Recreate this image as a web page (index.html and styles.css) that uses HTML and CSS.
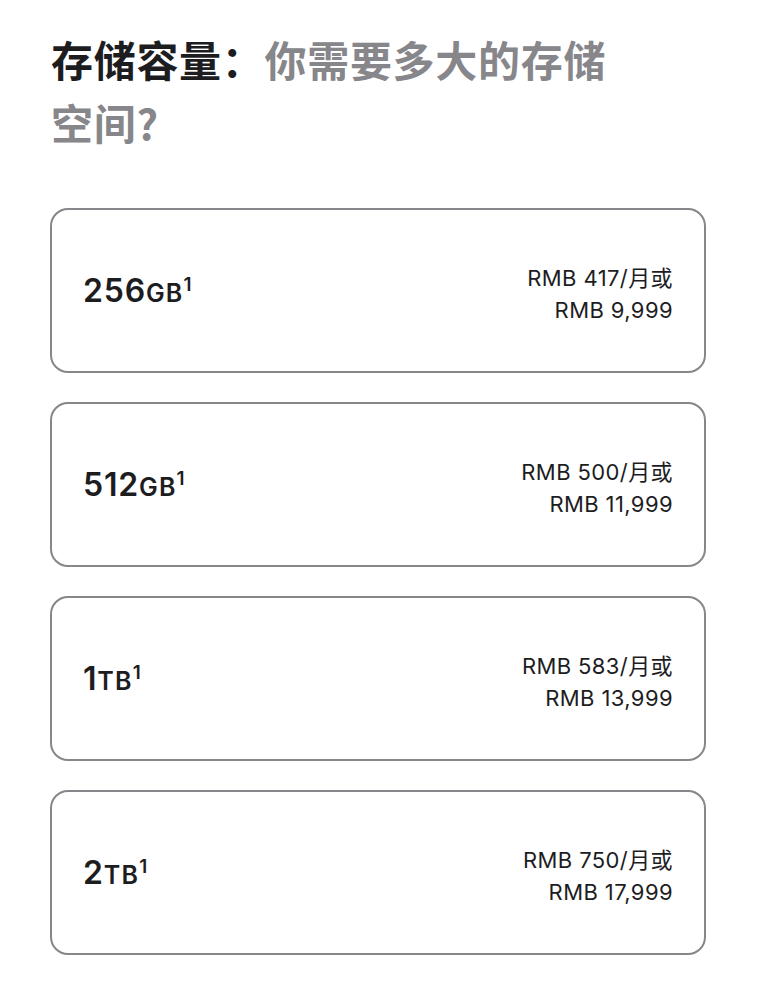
FILE: index.html
```html
<!DOCTYPE html>
<html lang="zh-CN">
<head>
    <meta charset="UTF-8">
    <meta name="viewport" content="width=device-width, initial-scale=1.0">
    <title>存储容量</title>
    <link rel="stylesheet" href="styles.css">
</head>
<body>
    <div class="container">
        <h2 class="title"><span class="title-main">存储容量：</span><span class="title-sub">你需要多大的存储空间?</span></h2>

        <div class="options">
            <div class="option">
                <div class="capacity">256<span class="unit">GB</span><sup>1</sup></div>
                <div class="price">
                    <p>RMB 417/月或</p>
                    <p>RMB 9,999</p>
                </div>
            </div>
            <div class="option">
                <div class="capacity">512<span class="unit">GB</span><sup>1</sup></div>
                <div class="price">
                    <p>RMB 500/月或</p>
                    <p>RMB 11,999</p>
                </div>
            </div>
            <div class="option">
                <div class="capacity">1<span class="unit">TB</span><sup>1</sup></div>
                <div class="price">
                    <p>RMB 583/月或</p>
                    <p>RMB 13,999</p>
                </div>
            </div>
            <div class="option">
                <div class="capacity">2<span class="unit">TB</span><sup>1</sup></div>
                <div class="price">
                    <p>RMB 750/月或</p>
                    <p>RMB 17,999</p>
                </div>
            </div>
        </div>
    </div>
</body>
</html>
```

FILE: styles.css
```css
body {
    font-family: Inter, "Noto Sans CJK SC", sans-serif;
    background-color: #fff;
    color: #1d1d1f;
    margin: 0;
    padding: 0;
}
.container {
    width: 656px;
    margin-left: 50px;
}
.title {
    max-width: 590px;
    margin: 27px 0 55px 1px;
    font-family: "Noto Sans CJK SC", sans-serif;
    font-size: 42px;
    font-weight: 700;
    line-height: 63px;
    letter-spacing: 0.7px;
    color: #1d1d1f;
}
.title-sub {
    color: #86868b;
}
.options {
    display: flex;
    flex-direction: column;
    gap: 29px;
}
.option {
    height: 165px;
    box-sizing: border-box;
    border: 2px solid #86868b;
    border-radius: 18px;
    padding: 0 31px;
    display: flex;
    align-items: center;
    justify-content: space-between;
}
.capacity {
    font-size: 32px;
    font-weight: 600;
    letter-spacing: 0.8px;
}
.unit {
    font-size: 25px;
    letter-spacing: 1.2px;
}
.capacity sup {
    font-size: 19px;
    font-weight: 600;
    vertical-align: 11px;
    line-height: 0;
}
.price {
    text-align: right;
    font-size: 22px;
    line-height: 32px;
    letter-spacing: 0.4px;
    margin-top: 7px;
}
.price p {
    margin: 0;
}
```
